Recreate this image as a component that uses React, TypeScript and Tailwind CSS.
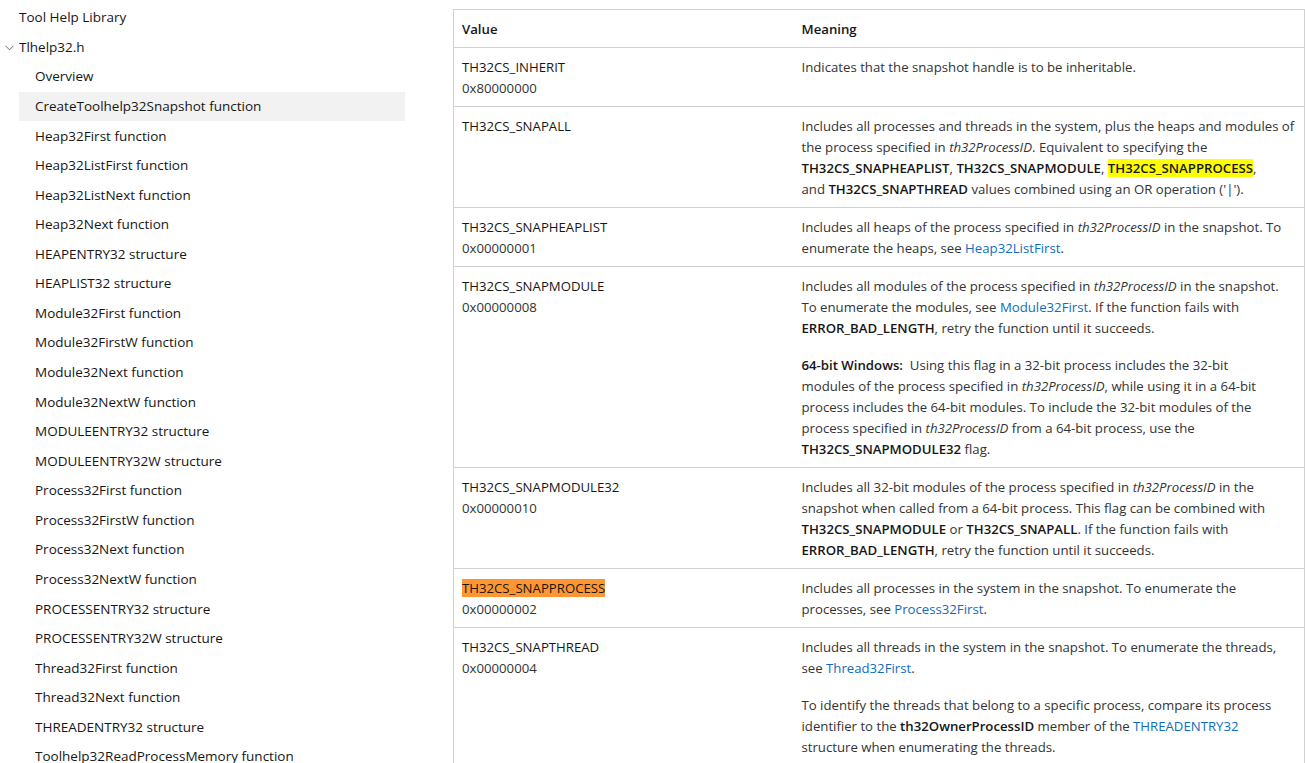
import React from 'react'

const items = [
    'Overview',
    'CreateToolhelp32Snapshot function',
    'Heap32First function',
    'Heap32ListFirst function',
    'Heap32ListNext function',
    'Heap32Next function',
    'HEAPENTRY32 structure',
    'HEAPLIST32 structure',
    'Module32First function',
    'Module32FirstW function',
    'Module32Next function',
    'Module32NextW function',
    'MODULEENTRY32 structure',
    'MODULEENTRY32W structure',
    'Process32First function',
    'Process32FirstW function',
    'Process32Next function',
    'Process32NextW function',
    'PROCESSENTRY32 structure',
    'PROCESSENTRY32W structure',
    'Thread32First function',
    'Thread32Next function',
    'THREADENTRY32 structure',
    'Toolhelp32ReadProcessMemory function',
]

function B({ children }: { children: React.ReactNode }) {
    return <strong className="font-semibold text-[#161616]">{children}</strong>
}

function I({ children }: { children: React.ReactNode }) {
    return <em className="italic">{children}</em>
}

function A({ children }: { children: React.ReactNode }) {
    return <a href="#" className="text-[#0f6cbd]">{children}</a>
}

function Sidebar() {
    return (
        <nav className="w-[405px] shrink-0 pt-[3px] text-[13.5px] text-[#161616]">
            <div className="ml-[19px] h-[29.57px] flex items-center">Tool Help Library</div>
            <div className="relative ml-[19px] h-[29.57px] flex items-center">
                <svg className="absolute -left-[14px] top-[12px]" width="9" height="6" viewBox="0 0 9 6" fill="none">
                    <path d="M0.5 0.8 L4.5 4.8 L8.5 0.8" stroke="#6b6b6b" strokeWidth="1" />
                </svg>
                Tlhelp32.h
            </div>
            <ul className="ml-[19px]">
                {items.map((item, i) => (
                    <li
                        key={item}
                        className={
                            i === 1
                                ? 'h-[29.57px] flex items-center pl-4 bg-[#f2f2f2] font-medium'
                                : 'h-[29.57px] flex items-center pl-4'
                        }
                    >
                        {item}
                    </li>
                ))}
            </ul>
        </nav>
    )
}

function Row({ name, value, children }: { name: React.ReactNode; value?: string; children: React.ReactNode }) {
    return (
        <tr className="border-t border-[#d1d1d1] align-top">
            <td className="px-2 pt-[9px] pb-[7px] w-[340px]">
                <div className="text-[#161616]">{name}</div>
                {value && <div>{value}</div>}
            </td>
            <td className="px-2 pt-[9px] pb-[7px] whitespace-nowrap">{children}</td>
        </tr>
    )
}

export default function App() {
    return (
        <div className="flex bg-white h-[763px] overflow-hidden leading-[21px] text-[#333] font-['Segoe_UI','Open_Sans',sans-serif]">
            <Sidebar />
            <main className="pl-[48px] pt-[9px] flex-1">
                <table className="w-[852px] table-fixed border border-[#d1d1d1] border-collapse text-[13.2px]">
                    <thead>
                        <tr className="text-left">
                            <th className="px-2 pt-[9px] pb-[7px] w-[340px] font-semibold text-[#161616]">Value</th>
                            <th className="px-2 pt-[9px] pb-[7px] font-semibold text-[#161616]">Meaning</th>
                        </tr>
                    </thead>
                    <tbody>
                        <Row name="TH32CS_INHERIT" value="0x80000000">
                            Indicates that the snapshot handle is to be inheritable.
                        </Row>
                        <Row name="TH32CS_SNAPALL">
                            Includes all processes and threads in the system, plus the heaps and modules of<br />
                            the process specified in <I>th32ProcessID</I>. Equivalent to specifying the<br />
                            <B>TH32CS_SNAPHEAPLIST</B>, <B>TH32CS_SNAPMODULE</B>,{' '}
                            <B><span className="bg-[#ffff00]">TH32CS_SNAPPROCESS</span></B>,<br />
                            and <B>TH32CS_SNAPTHREAD</B> values combined using an OR operation ('|').
                        </Row>
                        <Row name="TH32CS_SNAPHEAPLIST" value="0x00000001">
                            Includes all heaps of the process specified in <I>th32ProcessID</I> in the snapshot. To<br />
                            enumerate the heaps, see <A>Heap32ListFirst</A>.
                        </Row>
                        <Row name="TH32CS_SNAPMODULE" value="0x00000008">
                            <p>
                                Includes all modules of the process specified in <I>th32ProcessID</I> in the snapshot.<br />
                                To enumerate the modules, see <A>Module32First</A>. If the function fails with<br />
                                <B>ERROR_BAD_LENGTH</B>, retry the function until it succeeds.
                            </p>
                            <p className="mt-4">
                                <B>64-bit Windows:</B>&nbsp; Using this flag in a 32-bit process includes the 32-bit<br />
                                modules of the process specified in <I>th32ProcessID</I>, while using it in a 64-bit<br />
                                process includes the 64-bit modules. To include the 32-bit modules of the<br />
                                process specified in <I>th32ProcessID</I> from a 64-bit process, use the<br />
                                <B>TH32CS_SNAPMODULE32</B> flag.
                            </p>
                        </Row>
                        <Row name="TH32CS_SNAPMODULE32" value="0x00000010">
                            Includes all 32-bit modules of the process specified in <I>th32ProcessID</I> in the<br />
                            snapshot when called from a 64-bit process. This flag can be combined with<br />
                            <B>TH32CS_SNAPMODULE</B> or <B>TH32CS_SNAPALL</B>. If the function fails with<br />
                            <B>ERROR_BAD_LENGTH</B>, retry the function until it succeeds.
                        </Row>
                        <Row name={<span className="bg-[#ff9632]">TH32CS_SNAPPROCESS</span>} value="0x00000002">
                            Includes all processes in the system in the snapshot. To enumerate the<br />
                            processes, see <A>Process32First</A>.
                        </Row>
                        <Row name="TH32CS_SNAPTHREAD" value="0x00000004">
                            <p>
                                Includes all threads in the system in the snapshot. To enumerate the threads,<br />
                                see <A>Thread32First</A>.
                            </p>
                            <p className="mt-4">
                                To identify the threads that belong to a specific process, compare its process<br />
                                identifier to the <B>th32OwnerProcessID</B> member of the <A>THREADENTRY32</A><br />
                                structure when enumerating the threads.
                            </p>
                        </Row>
                    </tbody>
                </table>
            </main>
        </div>
    )
}
